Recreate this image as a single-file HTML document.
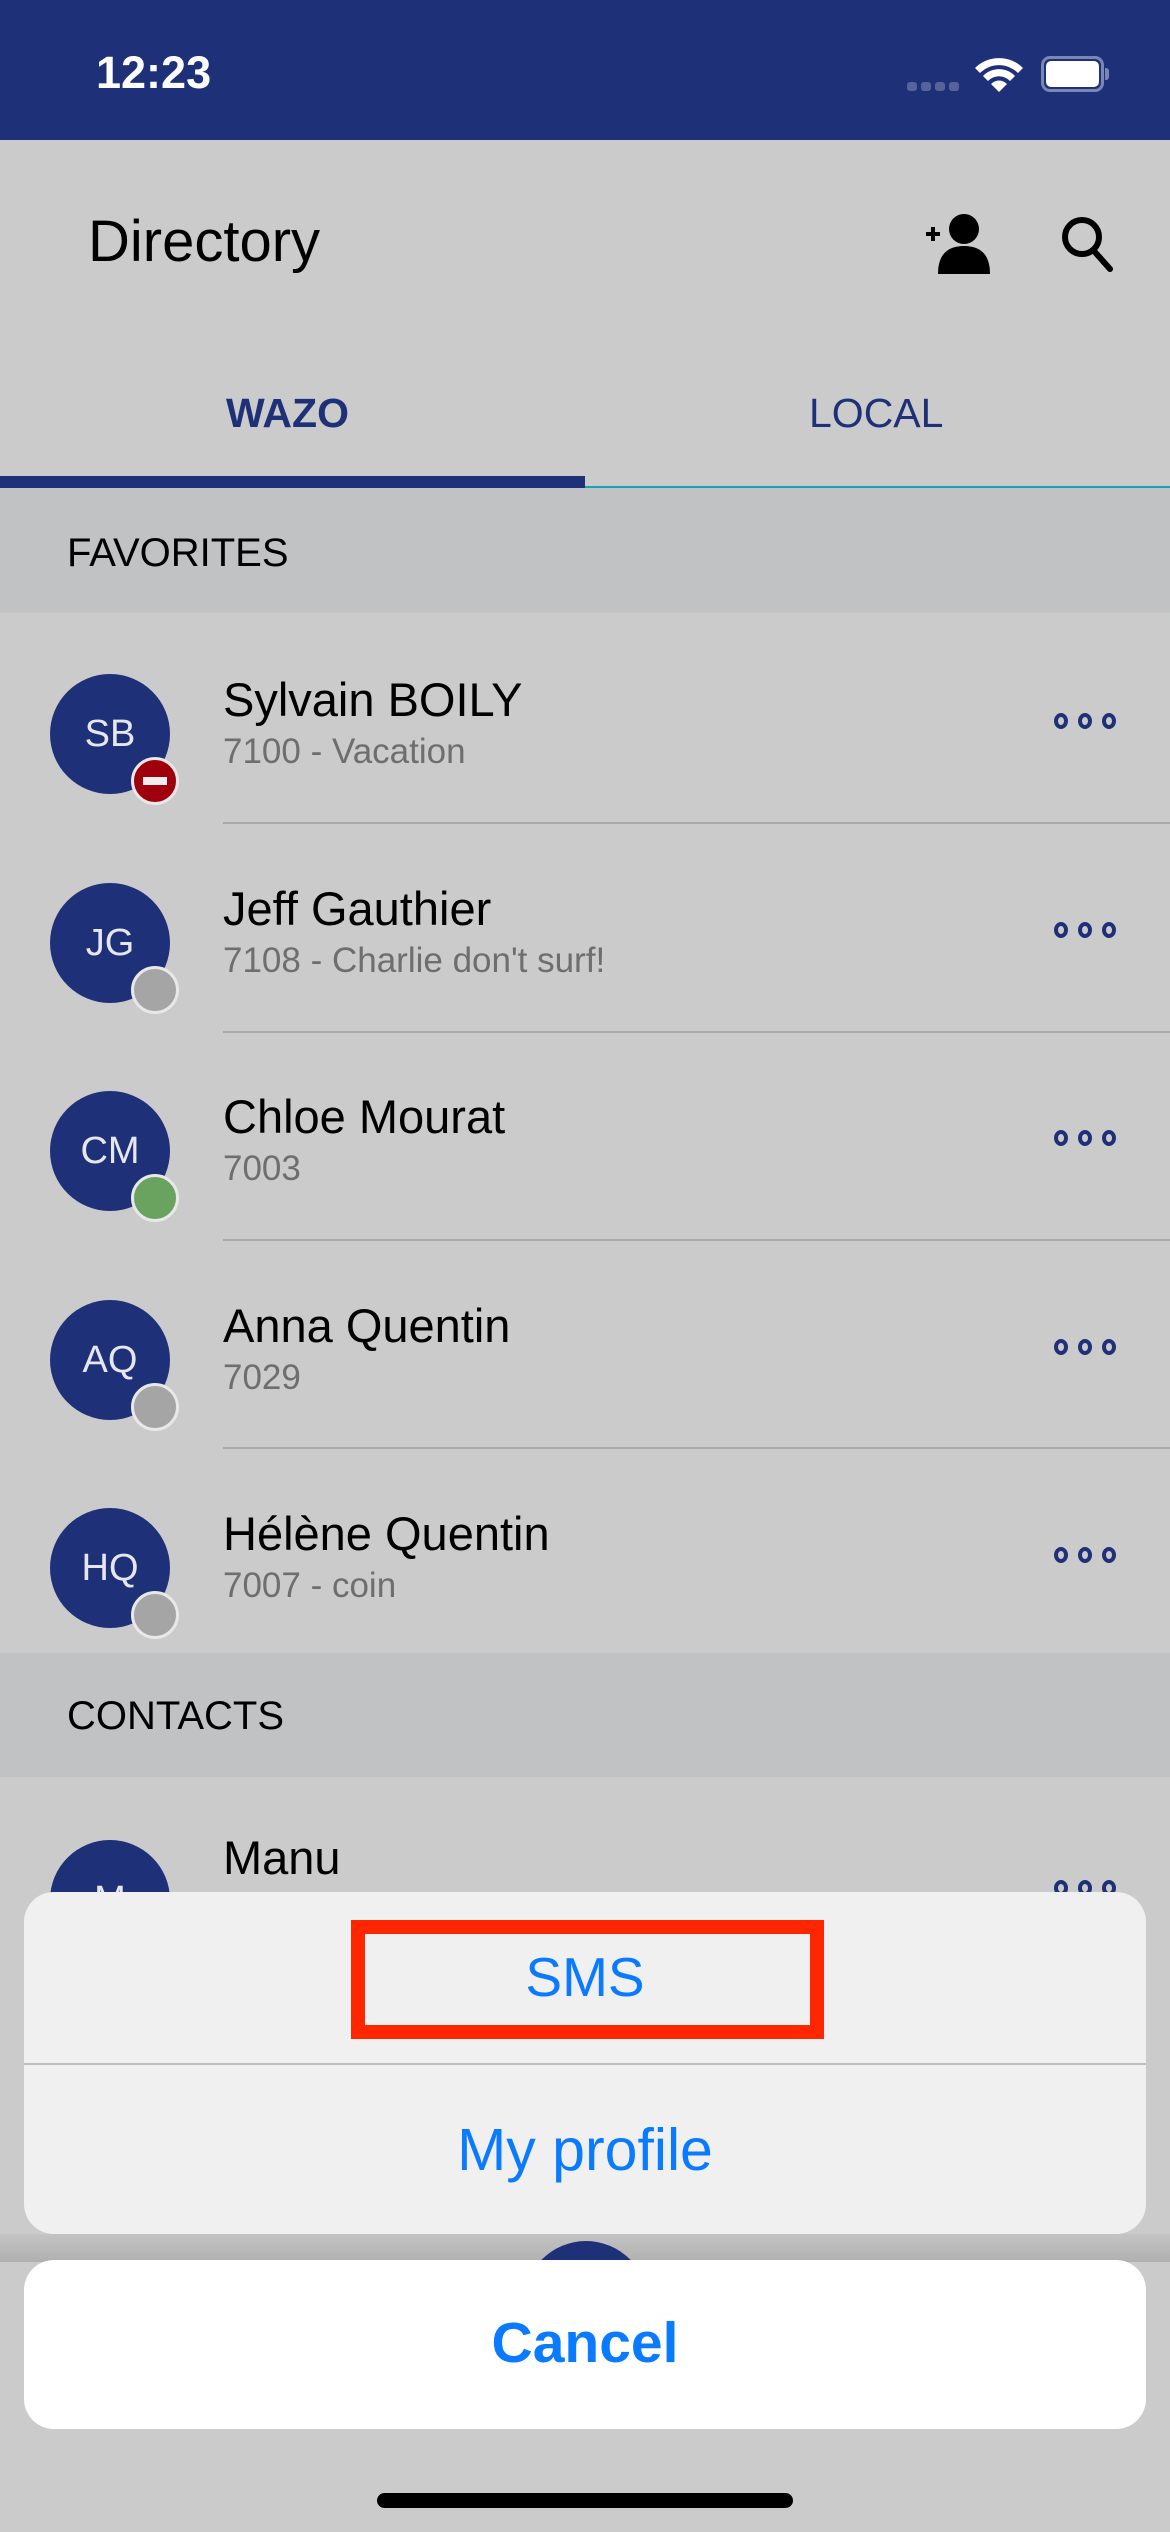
<!DOCTYPE html>
<html><head><meta charset="utf-8"><style>
*{margin:0;padding:0;box-sizing:border-box}
body{width:1170px;height:2532px;position:relative;overflow:hidden;background:#cbcbcb;font-family:"Liberation Sans",sans-serif}
.a{position:absolute}
.name{position:absolute;left:223px;font-size:47px;color:#000;line-height:1}
.sub{position:absolute;left:223px;font-size:35px;color:#6e6e6e;line-height:1}
.av{position:absolute;left:50px;width:120px;height:120px;border-radius:50%;background:#1e3178;color:#e6e6ee;font-size:38px;display:flex;align-items:center;justify-content:center}
.st{position:absolute;left:131px;width:48px;height:48px;border-radius:50%;border:3px solid #e8e8e8;background:#a5a5a5}
.sep{position:absolute;left:223px;right:0;height:2px;background:#a9a9a9}
.dots{position:absolute;left:1054px;width:62px;height:16px}
.dots i{position:absolute;top:0;width:14px;height:16px;border:4px solid #1e3178;border-radius:50%}
</style></head><body>
<div class="a" style="left:0;top:0;width:1170px;height:140px;background:#1e3178"></div>
<div class="a" style="left:96px;top:50px;font-size:45px;font-weight:bold;color:#fff;line-height:1">12:23</div>
<div class="a" style="left:907px;top:82px;width:10px;height:9px;border-radius:3px;background:#56629a"></div>
<div class="a" style="left:921px;top:82px;width:10px;height:9px;border-radius:3px;background:#56629a"></div>
<div class="a" style="left:935px;top:82px;width:10px;height:9px;border-radius:3px;background:#56629a"></div>
<div class="a" style="left:949px;top:82px;width:10px;height:9px;border-radius:3px;background:#56629a"></div>
<svg class="a" style="left:973px;top:54px" width="52" height="40" viewBox="0 0 52 40"><path d="M2 14 A34 34 0 0 1 50 14 L45 19 A27 27 0 0 0 7 19Z M10 22 A22 22 0 0 1 42 22 L37 27 A15 15 0 0 0 15 27Z M18 30 A11 11 0 0 1 34 30 L26 38Z" fill="#fff"/></svg>
<div class="a" style="left:1041px;top:56px;width:63px;height:36px;border:3px solid #7c86b4;border-radius:9px"></div>
<div class="a" style="left:1046px;top:61px;width:53px;height:26px;background:#fff;border-radius:5px"></div>
<div class="a" style="left:1105px;top:68px;width:4px;height:12px;background:#7c86b4;border-radius:0 3px 3px 0"></div>

<div class="a" style="left:88px;top:213px;font-size:58px;color:#000;line-height:1">Directory</div>
<svg class="a" style="left:920px;top:210px" width="70" height="64" viewBox="0 0 70 64"><path d="M6 24h14M13 17v14" stroke="#000" stroke-width="4"/><circle cx="44" cy="19" r="15"/><path d="M18 64 Q18 36 44 36 Q70 36 70 64Z"/></svg>
<svg class="a" style="left:1060px;top:215px" width="56" height="58" viewBox="0 0 56 58"><circle cx="22" cy="22" r="17" fill="none" stroke="#000" stroke-width="6"/><path d="M34 36 L50 54" stroke="#000" stroke-width="6" stroke-linecap="round"/></svg>

<div class="a" style="left:226px;top:393px;font-size:41px;font-weight:bold;color:#1e3178;line-height:1">WAZO</div>
<div class="a" style="left:809px;top:393px;font-size:41px;color:#1e3178;line-height:1">LOCAL</div>
<div class="a" style="left:0;top:476px;width:585px;height:12px;background:#1e3178"></div>
<div class="a" style="left:585px;top:486px;width:585px;height:2px;background:#1aa3b4"></div>

<div class="a" style="left:0;top:488px;width:1170px;height:125px;background:#c1c2c4"></div>
<div class="a" style="left:67px;top:533px;font-size:40px;color:#000;line-height:1">FAVORITES</div>

<div class="av" style="top:674px">SB</div><div class="st" style="top:757px;background:#a0000e"><div class="a" style="left:9px;top:17px;width:24px;height:8px;background:#eee"></div></div>
<div class="name" style="top:676px">Sylvain BOILY</div><div class="sub" style="top:734px">7100 - Vacation</div>
<div class="dots" style="top:713px"><i style="left:0"></i><i style="left:24px"></i><i style="left:48px"></i></div>
<div class="sep" style="top:822px"></div>

<div class="av" style="top:883px">JG</div><div class="st" style="top:966px"></div>
<div class="name" style="top:885px">Jeff Gauthier</div><div class="sub" style="top:943px">7108 - Charlie don't surf!</div>
<div class="dots" style="top:922px"><i style="left:0"></i><i style="left:24px"></i><i style="left:48px"></i></div>
<div class="sep" style="top:1031px"></div>

<div class="av" style="top:1091px">CM</div><div class="st" style="top:1174px;background:#6aa260"></div>
<div class="name" style="top:1093px">Chloe Mourat</div><div class="sub" style="top:1151px">7003</div>
<div class="dots" style="top:1130px"><i style="left:0"></i><i style="left:24px"></i><i style="left:48px"></i></div>
<div class="sep" style="top:1239px"></div>

<div class="av" style="top:1300px">AQ</div><div class="st" style="top:1383px"></div>
<div class="name" style="top:1302px">Anna Quentin</div><div class="sub" style="top:1360px">7029</div>
<div class="dots" style="top:1339px"><i style="left:0"></i><i style="left:24px"></i><i style="left:48px"></i></div>
<div class="sep" style="top:1447px"></div>

<div class="av" style="top:1508px">HQ</div><div class="st" style="top:1591px"></div>
<div class="name" style="top:1510px">Hélène Quentin</div><div class="sub" style="top:1568px">7007 - coin</div>
<div class="dots" style="top:1547px"><i style="left:0"></i><i style="left:24px"></i><i style="left:48px"></i></div>

<div class="a" style="left:0;top:1653px;width:1170px;height:124px;background:#c1c2c4"></div>
<div class="a" style="left:67px;top:1696px;font-size:40px;color:#000;line-height:1">CONTACTS</div>

<div class="av" style="top:1840px">M</div>
<div class="name" style="top:1834px">Manu</div>
<div class="dots" style="top:1880px"><i style="left:0"></i><i style="left:24px"></i><i style="left:48px"></i></div>

<div class="a" style="left:0;top:2234px;width:1170px;height:28px;background:linear-gradient(#c4c4c4,#b0b0b0)"></div>
<div class="a" style="left:524px;top:2241px;width:124px;height:124px;border-radius:50%;background:#1e3178"></div>

<div class="a" style="left:24px;top:1892px;width:1122px;height:342px;border-radius:30px;background:#f0f0f0"></div>
<div class="a" style="left:24px;top:2063px;width:1122px;height:2px;background:#bdbdbd"></div>
<div class="a" style="left:351px;top:1920px;width:473px;height:119px;border:14px solid #ff2600"></div>
<div class="a" style="left:0;top:1950px;width:1170px;text-align:center;font-size:55px;color:#0a7aff;line-height:1">SMS</div>
<div class="a" style="left:0;top:2121px;width:1170px;text-align:center;font-size:59px;color:#0a7aff;line-height:1">My profile</div>

<div class="a" style="left:24px;top:2260px;width:1122px;height:169px;border-radius:30px;background:#fff"></div>
<div class="a" style="left:0;top:2315px;width:1170px;text-align:center;font-size:57px;font-weight:bold;color:#0a7aff;line-height:1">Cancel</div>

<div class="a" style="left:377px;top:2493px;width:416px;height:15px;border-radius:8px;background:#000"></div>
</body></html>
